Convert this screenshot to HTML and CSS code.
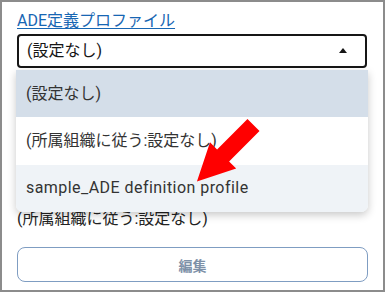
FILE: index.html
```html
<!DOCTYPE html>
<html lang="ja">
<head>
<meta charset="utf-8">
<link rel="stylesheet" href="styles.css">
</head>
<body>
<div class="frame">
  <a class="label" href="#">ADE定義プロファイル</a>
  <div class="field">
    <div class="select">
      <span class="value">(設定なし)</span>
      <span class="caret"></span>
    </div>
    <ul class="menu">
      <li class="item selected">(設定なし)</li>
      <li class="item">(所属組織に従う:設定なし)</li>
      <li class="item hover latin">sample_ADE definition profile</li>
    </ul>
  </div>
  <div class="current">(所属組織に従う:設定なし)</div>
  <button class="edit">編集</button>
  <svg class="arrow" width="385" height="292" viewBox="0 0 385 292">
    <polygon fill="#ff0000" transform="translate(253.5,125) rotate(135)" points="0,-8.5 43,-8.5 43,-18.5 80,0 43,18.5 43,8.5 0,8.5"/>
  </svg>
</div>
</body>
</html>
```

FILE: styles.css
```css
html, body {
  margin: 0;
  padding: 0;
  background: #ffffff;
}

body {
  font-family: Roboto, "Noto Sans CJK JP", sans-serif;
  font-size: 16px;
  color: #161616;
}

.frame {
  position: relative;
  box-sizing: border-box;
  width: 385px;
  height: 292px;
  border: 2px solid #8c8c8c;
  padding: 7px 15px 0 15px;
  display: flex;
  flex-direction: column;
  overflow: hidden;
}

.label {
  align-self: flex-start;
  color: #1766b3;
  text-decoration: underline;
  text-underline-offset: 2px;
  text-decoration-thickness: 1px;
  line-height: 24px;
  margin-bottom: 1px;
}

.field {
  position: relative;
  width: 350px;
}

.select {
  box-sizing: border-box;
  height: 34px;
  border: 2px solid #161616;
  border-radius: 4px;
  display: flex;
  align-items: center;
  justify-content: space-between;
  padding: 0 18px 0 8px;
}

.value {
  line-height: 24px;
  color: #161616;
}

.caret {
  width: 0;
  height: 0;
  border-left: 4.5px solid transparent;
  border-right: 4.5px solid transparent;
  border-bottom: 5px solid #161616;
  margin-top: -1px;
}

.menu {
  position: absolute;
  left: -1px;
  top: 36px;
  width: 352px;
  margin: 0;
  padding: 0;
  list-style: none;
  background: #ffffff;
  border-radius: 0 0 7px 7px;
  box-shadow: 0 3px 9px rgba(0, 0, 0, 0.22);
  overflow: hidden;
  z-index: 2;
}

.item {
  height: 47.4px;
  display: flex;
  align-items: center;
  padding-left: 10px;
  color: #333333;
  line-height: 24px;
}

.item.selected {
  background: #d4dee9;
}

.item.hover {
  background: #eff3f7;
}

.item.latin {
  letter-spacing: 0.45px;
}

.current {
  margin-top: 139px;
  line-height: 24px;
  color: #222222;
}

.edit {
  margin-top: 16px;
  width: 351px;
  height: 35px;
  box-sizing: border-box;
  background: #ffffff;
  border: 1px solid #7f9dc2;
  border-radius: 8px;
  font-family: Roboto, "Noto Sans CJK JP", sans-serif;
  font-size: 14px;
  font-weight: bold;
  color: #7e91a8;
  padding: 0;
}

.arrow {
  position: absolute;
  left: -2px;
  top: -2px;
  pointer-events: none;
  z-index: 3;
}
```
